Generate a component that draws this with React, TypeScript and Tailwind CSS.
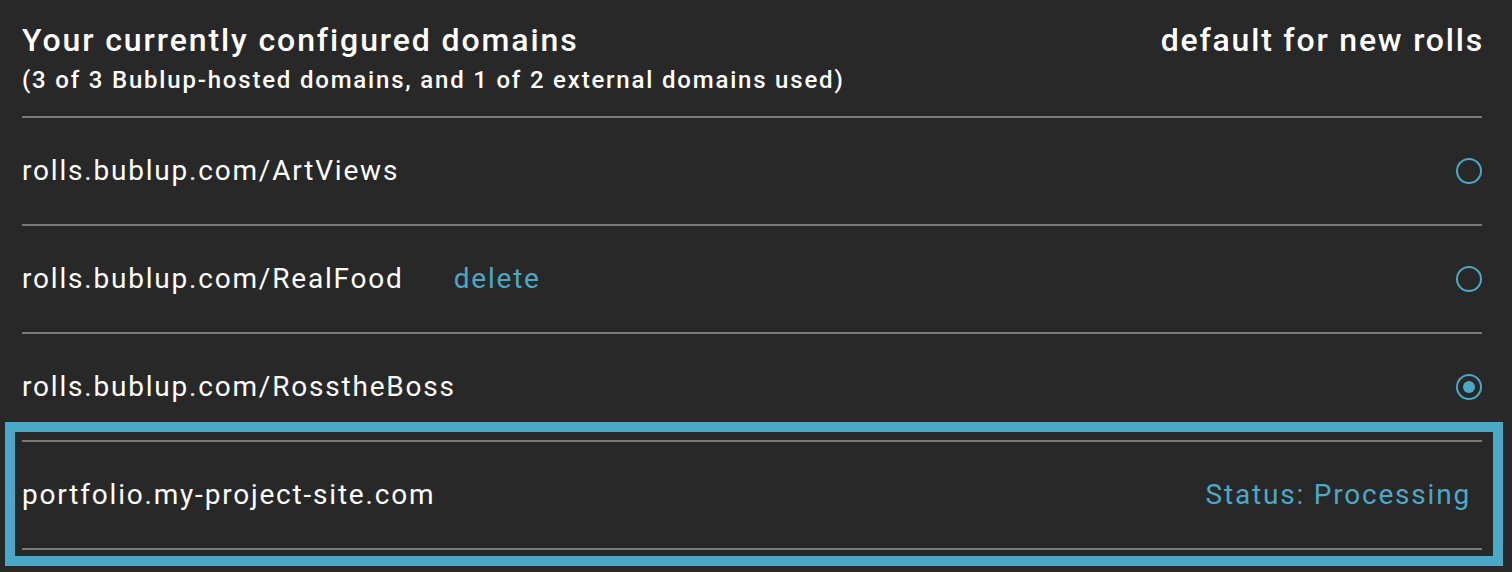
import { Fragment } from 'react'

const ACCENT = '#4ba8c6'

const DOMAINS = [
  { name: 'rolls.bublup.com/ArtViews', canDelete: false, selected: false },
  { name: 'rolls.bublup.com/RealFood', canDelete: true, selected: false },
  { name: 'rolls.bublup.com/RosstheBoss', canDelete: false, selected: true },
]

function Radio({ checked }: { checked: boolean }) {
  return (
    <div className="w-[26px] h-[26px] rounded-full border-2 border-[#4ba8c6] flex items-center justify-center">
      {checked && <div className="w-[12px] h-[12px] rounded-full bg-[#4ba8c6]" />}
    </div>
  )
}

export default function App() {
  return (
    <div className="min-h-screen w-full bg-[#282828] text-white pl-[22px] pr-[30px] pt-[20px] tracking-[1.8px] font-['Roboto','Liberation_Sans',sans-serif]">
      <div className="flex items-start justify-between h-[96px]">
        <div>
          <h1 className="text-[32px] leading-[40px] font-medium tracking-[1.9px]">Your currently configured domains</h1>
          <p className="mt-[6px] text-[24px] leading-[28px] font-medium">
            (3 of 3 Bublup-hosted domains, and 1 of 2 external domains used)
          </p>
        </div>
        <div className="text-[32px] leading-[40px] font-medium -mr-[2px]">default for new rolls</div>
      </div>

      {DOMAINS.map((d) => (
        <Fragment key={d.name}>
          <div className="h-[2px] bg-[#7a7a7a]" />
          <div className="h-[106px] flex items-center justify-between">
            <div className="flex items-center">
              <span className="text-[28px]">{d.name}</span>
              {d.canDelete && <span className="ml-[50px] text-[28px]" style={{ color: ACCENT }}>delete</span>}
            </div>
            <Radio checked={d.selected} />
          </div>
        </Fragment>
      ))}

      <div className="-ml-[17px] -mr-[21px] -mt-[18px] border-[10px] border-[#4ba8c6] pl-[7px] pr-[11px] pt-[8px] pb-[6px]">
        <div className="h-[2px] bg-[#7a7a7a]" />
        <div className="h-[106px] flex items-center justify-between">
          <span className="text-[28px]">portfolio.my-project-site.com</span>
          <span className="text-[28px] pr-[11px] text-[#4ba8c6]">Status: Processing</span>
        </div>
        <div className="h-[2px] bg-[#7a7a7a]" />
      </div>
    </div>
  )
}
